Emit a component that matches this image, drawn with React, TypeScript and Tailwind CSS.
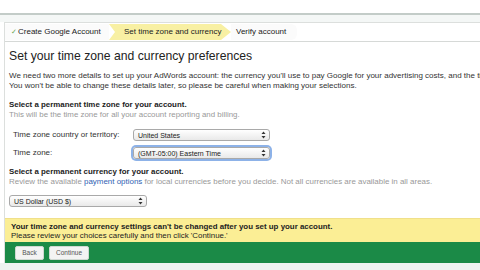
import React from "react";

function SelectBox({ text, width, focused }: { text: string; width: string; focused?: boolean }) {
  return (
    <div
      className={`${width} h-[12px] flex items-center justify-between rounded-[3px] border border-[#a9a9a9] bg-gradient-to-b from-white to-[#e9e9e9] pl-[4px] pr-[3px] text-[7px] leading-none text-[#222] ${
        focused ? "ring-2 ring-[#8db2e8]" : ""
      }`}
    >
      <span>{text}</span>
      <svg width="5" height="8" viewBox="0 0 5 8">
        <path d="M2.5 0.5 L4.5 3 L0.5 3 Z" fill="#333" />
        <path d="M2.5 7.5 L4.5 5 L0.5 5 Z" fill="#333" />
      </svg>
    </div>
  );
}

export default function App() {
  return (
    <div className="w-[480px] h-[270px] overflow-hidden bg-white font-['Liberation_Sans',Arial,sans-serif] text-[#333]">
      <div className="h-[13px] bg-white" />
      <div className="h-[2px] bg-[#c3ccc8]" />
      <div className="h-[7px] bg-[#f4f7f6]" />

      <div className="ml-[4px] border-l border-t border-[#dcdfdd]">
        {/* Breadcrumb */}
        <div className="h-[19px] flex items-center border-b border-[#d6d9d7] text-[8px] text-[#222]">
          <div className="h-[16px] w-[104px] flex items-center pl-[6px] bg-[#fbfbfb]">
            <span className="text-[#6aa84f] text-[7px] mr-[1px]">✓</span>
            Create Google Account
          </div>
          <div className="h-[16px] w-[122px] flex items-center pl-[15px] bg-[#f8f0a3] [clip-path:polygon(0_0,112px_0,122px_50%,112px_100%,0_100%,6px_50%)]">
            Set time zone and currency
          </div>
          <div className="h-[16px] w-[66px] flex items-center pl-[5px] bg-[#fbfbfb] rounded-r-[6px]">
            Verify account
          </div>
        </div>

        {/* Content */}
        <div className="pl-[4px]">
          <h1 className="mt-[6px] text-[12.2px] leading-[16px] text-[#222]">
            Set your time zone and currency preferences
          </h1>
          <div className="mt-[7px] text-[8px] leading-[10px] text-[#333] whitespace-nowrap">
            <p>
              We need two more details to set up your AdWords account: the currency you'll use to pay Google for your advertising costs, and the time zone
            </p>
            <p>You won't be able to change these details later, so please be careful when making your selections.</p>
          </div>

          <div className="mt-[9px] text-[7.9px] leading-[10px]">
            <p className="font-bold text-[#222]">Select a permanent time zone for your account.</p>
            <p className="text-[#999] text-[7.9px]">This will be the time zone for all your account reporting and billing.</p>
          </div>

          <div className="mt-[9px] flex items-center pl-[4px] text-[8px] text-[#333]">
            <span className="w-[120px]">Time zone country or territory:</span>
            <SelectBox text="United States" width="w-[137px]" />
          </div>
          <div className="mt-[6px] flex items-center pl-[4px] text-[8px] text-[#333]">
            <span className="w-[120px]">Time zone:</span>
            <SelectBox text="(GMT-05:00) Eastern Time" width="w-[137px]" focused />
          </div>

          <div className="mt-[8px] text-[7.9px] leading-[10px]">
            <p className="font-bold text-[#222]">Select a permanent currency for your account.</p>
            <p className="text-[#999] text-[7.95px]">
              Review the available <span className="text-[#2f5fb3]">payment options</span> for local currencies before you decide. Not all currencies are available in all areas.
            </p>
          </div>

          <div className="mt-[8px]">
            <SelectBox text="US Dollar (USD $)" width="w-[138px]" />
          </div>
        </div>

        {/* Warning band */}
        <div className="mt-[11px] h-[24px] bg-[#fbee95] pl-[6px] pt-[3px] text-[7.9px] leading-[9px] text-[#222] border-t border-[#f0e08a]">
          <p className="font-bold">Your time zone and currency settings can't be changed after you set up your account.</p>
          <p>Please review your choices carefully and then click 'Continue.'</p>
        </div>

        {/* Action bar */}
        <div className="h-[21px] bg-[#1b8a47] flex items-center gap-[5px] pl-[10px]">
          <button className="h-[14px] w-[29px] bg-[#f3f3f3] border border-[#cfd8d2] rounded-[2px] text-[6.5px] text-[#555]">
            Back
          </button>
          <button className="h-[14px] w-[40px] bg-[#f3f3f3] border border-[#cfd8d2] rounded-[2px] text-[6.5px] text-[#555]">
            Continue
          </button>
        </div>
      </div>
      <div className="h-[10px] bg-[#eef3f1]" />
    </div>
  );
}
